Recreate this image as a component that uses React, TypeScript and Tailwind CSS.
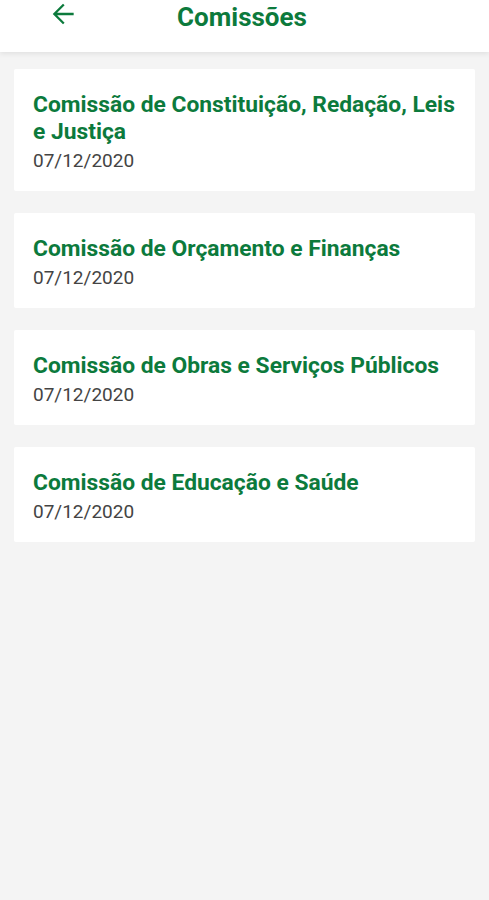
const comissoes = [
  { nome: 'Comissão de Constituição, Redação, Leis e Justiça', data: '07/12/2020' },
  { nome: 'Comissão de Orçamento e Finanças', data: '07/12/2020' },
  { nome: 'Comissão de Obras e Serviços Públicos', data: '07/12/2020' },
  { nome: 'Comissão de Educação e Saúde', data: '07/12/2020' },
];

function ArrowBack() {
  return (
    <svg width="32" height="32" viewBox="0 0 24 24" fill="currentColor">
      <path d="M20 11.1H7.6l5.6-5.6L12 4.3 4.3 12l7.7 7.7 1.2-1.2-5.6-5.6H20v-1.8z" />
    </svg>
  );
}

export default function App() {
  return (
    <div className="min-h-[900px] bg-[#f4f4f4] font-['Roboto',sans-serif]">
      {/* Header */}
      <header className="relative h-[52px] bg-white shadow-[0_2px_5px_rgba(0,0,0,0.08)]">
        <button className="absolute left-[47px] top-[-2px] text-[#0c7a3c]">
          <ArrowBack />
        </button>
        <h1 className="pt-[2px] pr-[5px] text-center text-[26px] font-bold leading-[30px] text-[#0c7a3c]">
          Comissões
        </h1>
      </header>

      {/* Lista */}
      <main className="flex flex-col gap-[22px] px-[14px] pt-[17px]">
        {comissoes.map((c) => (
          <div key={c.nome} className="rounded-[2px] bg-white px-[19px] pt-[22px] pb-[19px]">
            <p className="text-[22.8px] font-bold leading-[27px] text-[#0c7a3c]">{c.nome}</p>
            <p className="mt-[5px] text-[19px] leading-[22px] text-[#444444]">{c.data}</p>
          </div>
        ))}
      </main>
    </div>
  );
}
